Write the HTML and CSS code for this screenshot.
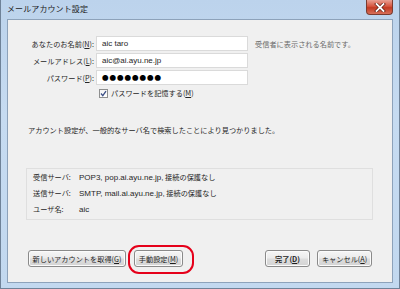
FILE: index.html
```html
<!DOCTYPE html>
<html lang="ja">
<head>
<meta charset="utf-8">
<link rel="stylesheet" href="styles.css">
</head>
<body>
<div class="window">
  <div class="titlebar">
    <span class="title">メールアカウント設定</span>
    <div class="close">
      <svg width="12" height="9" viewBox="0 0 12 9"><path d="M2.5 1 L9.5 8 M9.5 1 L2.5 8" stroke="#5a1a10" stroke-width="3.2" stroke-linecap="square"/><path d="M2.5 1 L9.5 8 M9.5 1 L2.5 8" stroke="#ffffff" stroke-width="1.8" stroke-linecap="square"/></svg>
    </div>
  </div>
  <div class="client">
    <div class="form">
      <label class="lbl">あなたのお名前(<u>N</u>):</label>
      <div class="field"><span class="lat">aic taro</span></div>
      <span class="hint">受信者に表示される名前です。</span>
      <label class="lbl">メールアドレス(<u>L</u>):</label>
      <div class="field"><span class="lat">aic@ai.ayu.ne.jp</span></div>
      <span></span>
      <label class="lbl">パスワード(<u>P</u>):</label>
      <div class="field dots">●●●●●●●●</div>
      <span></span>
      <span></span>
      <div class="check">
        <span class="box"><svg width="7" height="7" viewBox="0 0 7 7"><path d="M1 3.5 L2.8 5.6 L6 1.2" fill="none" stroke="#3b4f86" stroke-width="1.3"/></svg></span>
        <span>パスワードを記憶する(<u>M</u>)</span>
      </div>
    </div>
    <p class="msg">アカウント設定が、一般的なサーバ名で検索したことにより見つかりました。</p>
    <div class="info">
      <div class="irow"><span class="ik">受信サーバ:</span><span><span class="lat">POP3, pop.ai.ayu.ne.jp,</span> 接続の保護なし</span></div>
      <div class="irow"><span class="ik">送信サーバ:</span><span><span class="lat">SMTP, mail.ai.ayu.ne.jp,</span> 接続の保護なし</span></div>
      <div class="irow"><span class="ik">ユーザ名:</span><span class="lat">aic</span></div>
    </div>
    <div class="buttons">
      <div class="left">
        <button class="btn b-new">新しいアカウントを取得(<u>G</u>)</button>
        <button class="btn b-manual">手動設定(<u>M</u>)<span class="ring"></span></button>
      </div>
      <div class="right">
        <button class="btn b-done">完了(<u>D</u>)</button>
        <button class="btn b-cancel">キャンセル(<u>A</u>)</button>
      </div>
    </div>
  </div>
</div>
</body>
</html>
```
FILE: styles.css
```css
* { box-sizing: border-box; }
html, body { margin: 0; padding: 0; }
body {
  width: 400px;
  height: 289px;
  overflow: hidden;
  font-family: "Noto Sans CJK JP", "Noto Sans", sans-serif;
  font-size: 7.2px;
  color: #262626;
  background: #ffffff;
}
.lat {
  font-family: "Liberation Sans", "Noto Sans CJK JP", sans-serif;
  font-size: 8px;
}
.window {
  width: 400px;
  height: 289px;
  background: linear-gradient(#bcd3ec, #c6dbf1 40%, #c2d8ef);
  border: 1px solid #6f8298;
  border-top: none;
  display: flex;
  flex-direction: column;
  padding: 0 6px 5px 6px;
}
.titlebar {
  height: 19px;
  flex: none;
  display: flex;
  align-items: flex-start;
  justify-content: space-between;
}
.title {
  font-size: 8px;
  line-height: 10px;
  margin-top: 4px;
  color: #222;
  letter-spacing: 0.1px;
}
.close {
  width: 27px;
  height: 15px;
  border: 1px solid #7a3b2f;
  border-top: none;
  border-radius: 0 0 4px 4px;
  background: linear-gradient(#e9a093, #d6553f 45%, #c23a22 55%, #d8705a);
  display: flex;
  align-items: center;
  justify-content: center;
}
.client {
  flex: 1;
  background: #f0f0f0;
  border: 1px solid #8da2ba;
  display: flex;
  flex-direction: column;
  padding: 16px 18px 0 18px;
}
.form {
  display: grid;
  grid-template-columns: 68px 152px auto;
  column-gap: 2px;
  row-gap: 2px;
  align-items: center;
}
.lbl {
  text-align: right;
  line-height: 10px;
  white-space: nowrap;
}
.field {
  height: 15px;
  background: #ffffff;
  border: 1px solid #dadada;
  padding: 0 5px;
  line-height: 13px;
  white-space: nowrap;
}
.dots {
  font-size: 6.5px;
  letter-spacing: 1px;
  color: #000;
}
.hint {
  color: #6a6a6a;
  padding-left: 5px;
  white-space: nowrap;
}
.check {
  display: flex;
  align-items: center;
  gap: 3px;
  margin-top: 1px;
  padding-left: 3px;
  line-height: 10px;
}
.box {
  width: 9px;
  height: 9px;
  border: 1px solid #8e8f8f;
  background: linear-gradient(#f4f4f4, #ffffff);
  display: flex;
  align-items: center;
  justify-content: center;
}
.msg {
  margin: 27px 0 0 2px;
  line-height: 10px;
}
.info {
  margin-top: 33px;
  border: 1px solid #dfdfdf;
  padding: 0 7px 2px 6px;
  margin-right: 1px;
}
.irow {
  height: 16px;
  display: flex;
  align-items: center;
  white-space: nowrap;
}
.ik {
  width: 46px;
  flex: none;
}
.buttons {
  margin-top: 30px;
  display: flex;
  justify-content: space-between;
  padding: 0 2px;
}
.left { display: flex; gap: 8px; }
.right { display: flex; gap: 7px; }
.btn {
  position: relative;
  height: 17px;
  padding: 0;
  font-family: inherit;
  font-size: 7.2px;
  color: #1e1e1e;
  border: 1px solid #8a8a8a;
  border-radius: 3px;
  background: linear-gradient(#f6f6f6, #ebebeb 48%, #dddddd 52%, #d4d4d4);
  box-shadow: inset 0 0 0 1px #fbfbfb;
  display: flex;
  align-items: center;
  justify-content: center;
  white-space: nowrap;
}
.b-new { width: 98px; }
.b-manual { width: 49px; }
.b-done { width: 45px; font-weight: bold; }
.b-cancel { width: 55px; }
.ring {
  position: absolute;
  left: -7px;
  top: -6px;
  width: 66px;
  height: 29px;
  border: 2.5px solid #e5001a;
  border-radius: 11px;
}
```
